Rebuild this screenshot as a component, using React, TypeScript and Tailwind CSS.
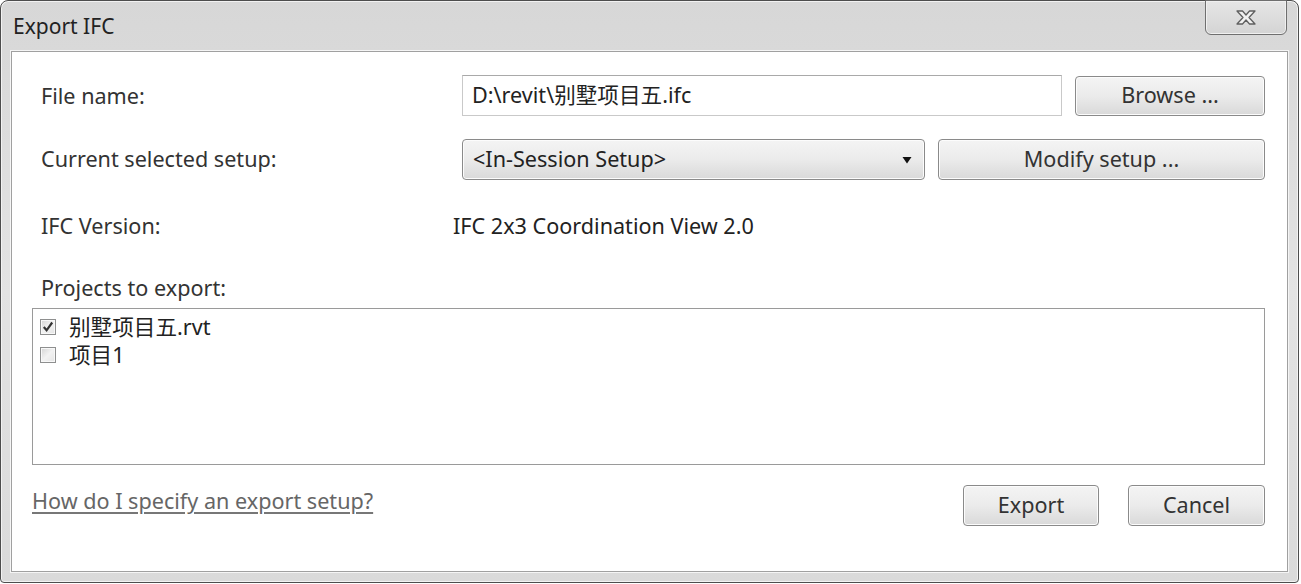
import React from "react";

const font = '"Noto Sans", "Noto Sans CJK SC", sans-serif';

function Btn({ children, className = "" }: { children: React.ReactNode; className?: string }) {
  return (
    <div
      className={
        "flex items-center justify-center rounded-[4px] border border-[#8a8a8a] bg-gradient-to-b from-[#f4f4f4] via-[#ebebeb] to-[#d9d9d9] text-[#333] shadow-[inset_0_0_0_1px_#fcfcfc] " +
        className
      }
    >
      {children}
    </div>
  );
}

function Check({ checked }: { checked: boolean }) {
  return (
    <div className="flex h-[16px] w-[16px] items-center justify-center border border-[#8e8f8f] bg-gradient-to-br from-[#d4d4d4] via-[#f2f2f2] to-[#e4e4e4] shadow-[inset_0_0_0_1px_#f8f8f8]">
      {checked && (
        <svg width="12" height="12" viewBox="0 0 12 12">
          <path d="M1.8 6 L4.6 9.3 L10.2 1.5" fill="none" stroke="#333" strokeWidth="2.2" />
        </svg>
      )}
    </div>
  );
}

export default function App() {
  return (
    <div className="h-[584px] w-[1301px] overflow-hidden bg-white" style={{ fontFamily: font }}>
      <div className="relative flex h-[583px] w-[1299px] flex-col rounded-t-[8px] rounded-b-[4px] border border-[#4d4d4d] bg-gradient-to-b from-[#d7d7d7] via-[#e3e3e3] to-[#dadada] shadow-[inset_0_0_0_1px_#f2f2f2]">
        {/* title bar */}
        <div className="flex h-[50px] shrink-0 items-start pl-[12px] pt-[10px]">
          <span className="text-[21px] leading-[30px] text-[#222]">Export IFC</span>
        </div>
        <div className="absolute right-[11px] top-[-1px] flex h-[35px] w-[82px] items-center justify-center rounded-b-[6px] border border-[#6f6f6f] bg-gradient-to-b from-[#e6e6e6] to-[#d4d4d4] shadow-[inset_0_0_0_1px_#f0f0f0]">
          <svg width="22" height="15" viewBox="0 0 22 15">
            <path
              d="M2 1 H7.5 L11 5 L14.5 1 H20 L14 7.5 L20 14 H14.5 L11 10 L7.5 14 H2 L8 7.5 Z"
              fill="#f2f2f2"
              stroke="#5f5f5f"
              strokeWidth="1.3"
              strokeLinejoin="round"
            />
          </svg>
        </div>

        {/* content */}
        <div className="mx-[10px] mb-[10px] flex flex-1 flex-col border border-[#a0a0a0] bg-white pl-[20px] pr-[22px] text-[21.6px] text-[#333] shadow-[0_0_0_1px_#f5f5f5]">
          {/* file name row */}
          <div className="mt-[23px] flex h-[41px] items-center">
            <span className="w-[430px] pl-[9px] pt-[2px]">File name:</span>
            <div className="flex h-[41px] w-[600px] items-center border border-[#c9c9c9] border-t-[#a9a9a9] pl-[9px] text-[#222]">
              D:\revit\别墅项目五.ifc
            </div>
            <Btn className="ml-[13px] h-[40px] w-[190px]">Browse ...</Btn>
          </div>

          {/* setup row */}
          <div className="mt-[23px] flex h-[41px] items-center">
            <span className="w-[430px] pl-[9px]">Current selected setup:</span>
            <Btn className="h-[41px] w-[463px] !justify-between px-[10px] !text-[#222]">
              <span>&lt;In-Session Setup&gt;</span>
              <svg width="10" height="8" viewBox="0 0 10 8" className="mr-[2px]">
                <path d="M0.5 1 H9.5 L5 7.5 Z" fill="#111" />
              </svg>
            </Btn>
            <Btn className="ml-[13px] h-[41px] w-[327px]">Modify setup ...</Btn>
          </div>

          {/* IFC version */}
          <div className="mt-[26px] flex h-[40px] items-center">
            <span className="w-[421px] pl-[9px]">IFC Version:</span>
            <span className="text-[#222]">IFC 2x3 Coordination View 2.0</span>
          </div>

          {/* projects label */}
          <div className="mt-[29px] flex h-[26px] items-center pl-[9px]">Projects to export:</div>

          {/* list */}
          <div className="mt-[7px] flex h-[157px] flex-col border border-[#9a9a9a] pl-[7px] pt-[4px] text-[#222]">
            <div className="flex h-[28px] items-center gap-[13px]">
              <Check checked />
              <span>别墅项目五.rvt</span>
            </div>
            <div className="flex h-[28px] items-center gap-[13px]">
              <Check checked={false} />
              <span>项目1</span>
            </div>
          </div>

          {/* footer */}
          <div className="mt-[20px] flex items-start">
            <span className="mt-[0px] text-[#666] underline decoration-[#777] underline-offset-[3px]">
              How do I specify an export setup?
            </span>
            <div className="ml-auto flex gap-[29px]">
              <Btn className="h-[41px] w-[136px]">Export</Btn>
              <Btn className="h-[41px] w-[137px]">Cancel</Btn>
            </div>
          </div>
        </div>
      </div>
    </div>
  );
}
